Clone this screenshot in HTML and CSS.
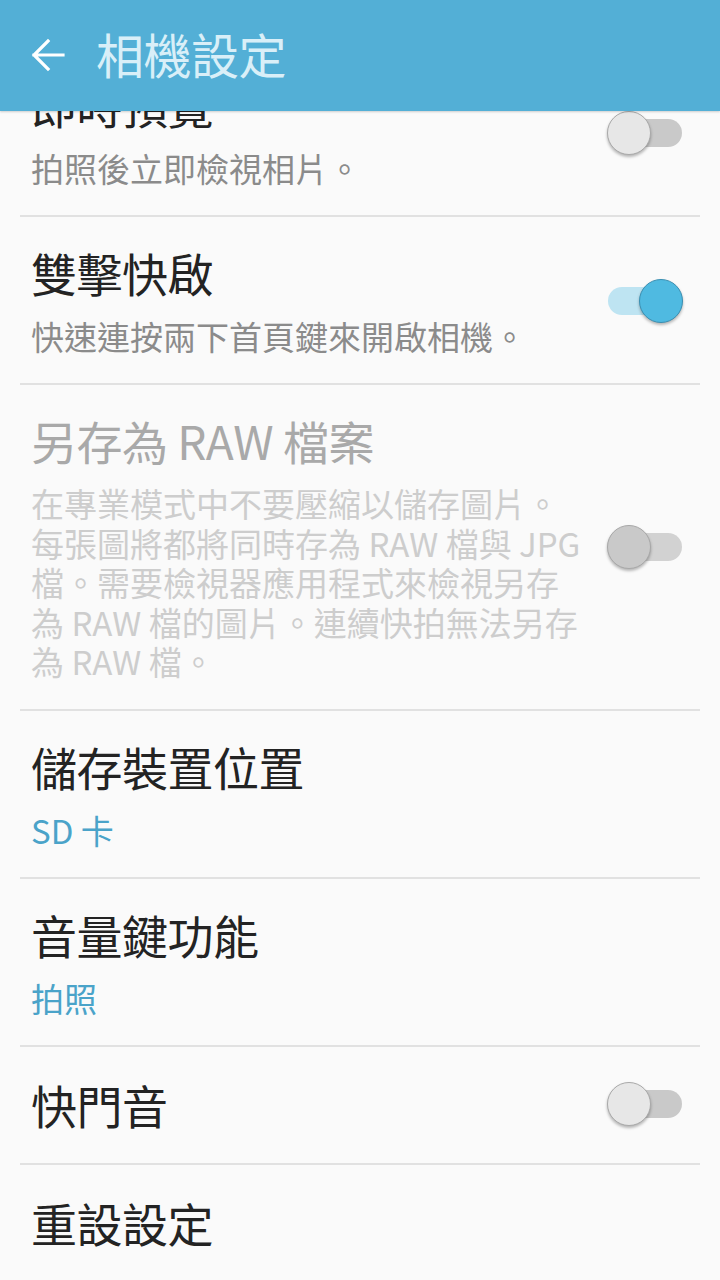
FILE: index.html
```html
<!DOCTYPE html>
<html lang="zh-Hant">
<head>
<meta charset="utf-8">
<title>相機設定</title>
<link rel="stylesheet" href="styles.css">
</head>
<body>
<div class="screen">
  <header class="appbar">
    <svg class="back" width="34" height="34" viewBox="0 0 34 34" aria-hidden="true">
      <path d="M3 17 H32 M17 3 L3 17 L17 31" fill="none" stroke="#ffffff" stroke-width="3.2" stroke-linecap="square" stroke-linejoin="miter"/>
    </svg>
    <h1 class="appbar-title">相機設定</h1>
  </header>
  <main class="viewport">
    <ul class="list">
      <li class="item">
        <div class="text">
          <div class="title">即時預覽</div>
          <div class="sub">拍照後立即檢視相片。</div>
        </div>
        <div class="switch"><span class="track"></span><span class="thumb"></span></div>
      </li>
      <li class="item">
        <div class="text">
          <div class="title">雙擊快啟</div>
          <div class="sub">快速連按兩下首頁鍵來開啟相機。</div>
        </div>
        <div class="switch on"><span class="track"></span><span class="thumb"></span></div>
      </li>
      <li class="item disabled">
        <div class="text">
          <div class="title">另存為 RAW 檔案</div>
          <div class="sub long">在專業模式中不要壓縮以儲存圖片。每張圖將都將同時存為 RAW 檔與 JPG 檔。需要檢視器應用程式來檢視另存為 RAW 檔的圖片。連續快拍無法另存為 RAW 檔。</div>
        </div>
        <div class="switch"><span class="track"></span><span class="thumb"></span></div>
      </li>
      <li class="item">
        <div class="text">
          <div class="title">儲存裝置位置</div>
          <div class="sub value">SD 卡</div>
        </div>
      </li>
      <li class="item">
        <div class="text">
          <div class="title">音量鍵功能</div>
          <div class="sub value">拍照</div>
        </div>
      </li>
      <li class="item single">
        <div class="text">
          <div class="title">快門音</div>
        </div>
        <div class="switch"><span class="track"></span><span class="thumb"></span></div>
      </li>
      <li class="item single">
        <div class="text">
          <div class="title">重設設定</div>
        </div>
      </li>
    </ul>
  </main>
</div>
</body>
</html>
```

FILE: styles.css
```css
* { box-sizing: border-box; }

html, body {
  margin: 0;
  padding: 0;
  background: #fafafa;
}

body {
  font-family: "Noto Sans CJK TC", "Noto Sans", sans-serif;
  width: 720px;
  height: 1280px;
  overflow: hidden;
}

.screen {
  width: 720px;
  height: 1280px;
  display: flex;
  flex-direction: column;
  background: #fafafa;
}

.appbar {
  position: relative;
  z-index: 2;
  flex: 0 0 111px;
  height: 111px;
  background: #53afd6;
  display: flex;
  align-items: center;
  padding-left: 31px;
  gap: 31px;
  box-shadow: 0 1px 2px rgba(0, 0, 0, 0.18);
}

.back {
  display: block;
  flex: 0 0 auto;
  margin-top: -1px;
}

.appbar-title {
  margin: 0;
  font-weight: 400;
  font-size: 48px;
  line-height: 56px;
  color: #d9eff8;
  letter-spacing: -0.5px;
  margin-top: -6px;
}

.viewport {
  flex: 1 1 auto;
  overflow: hidden;
}

.list {
  list-style: none;
  margin: -62px 20px 0 20px;
  padding: 0;
}

.item {
  display: flex;
  align-items: center;
  gap: 17px;
  padding: 28px 15px 27px 11px;
  border-bottom: 2px solid #e1e1e1;
}

.item.single {
  padding-top: 30px;
  padding-bottom: 32px;
}

.text {
  flex: 1 1 auto;
  min-width: 0;
  display: flex;
  flex-direction: column;
  gap: 17px;
}

.title {
  font-size: 46px;
  line-height: 54px;
  color: #232323;
  letter-spacing: -0.5px;
  white-space: nowrap;
}

.sub {
  font-size: 33px;
  line-height: 40px;
  color: #8b8b8b;
}

.sub.long {
  line-height: 39.5px;
}

.sub.value {
  color: #4aa3c9;
}

.disabled .title {
  color: #a9a9a9;
}

.disabled .sub {
  color: #cdcdcd;
}

/* switch */
.switch {
  position: relative;
  flex: 0 0 80px;
  width: 80px;
  height: 48px;
}

.track {
  position: absolute;
  left: 3px;
  top: 10px;
  width: 74px;
  height: 28px;
  border-radius: 14px;
  background: #c9c9c9;
}

.thumb {
  position: absolute;
  left: 2px;
  top: 2px;
  width: 44px;
  height: 44px;
  border-radius: 50%;
  background: #e7e7e7;
  border: 1px solid #a9a9a9;
  box-shadow: 0 2px 3px rgba(0, 0, 0, 0.28);
}

.switch.on .track {
  background: #bee4f2;
}

.switch.on .thumb {
  left: 34px;
  background: #4fbae1;
  border-color: #3a8fb2;
}

.disabled .track {
  background: #d2d2d2;
}

.disabled .thumb {
  background: #c9c9c9;
  border-color: #a8a8a8;
}
```
